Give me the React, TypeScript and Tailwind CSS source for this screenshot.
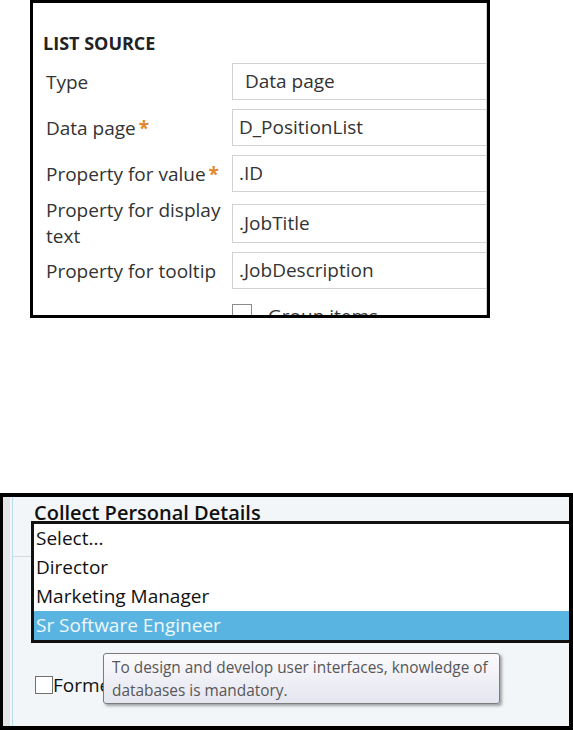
const FIELDS = [
  { label: "Type", value: "Data page", required: false, pad: "pl-[12px]" },
  { label: "Data page", value: "D_PositionList", required: true, pad: "pl-[6px]" },
  { label: "Property for value", value: ".ID", required: true, pad: "pl-[6px]" },
];

const OPTIONS = ["Select...", "Director", "Marketing Manager", "Sr Software Engineer"];

function Star() {
  return <span className="ml-[3px] font-bold text-[#e0892d]">*</span>;
}

function Field({ value, pad, tall }: { value: string; pad: string; tall?: boolean }) {
  return (
    <div className={`flex-1 -mr-[20px] flex items-center border border-[#d2d2d2] bg-white ${tall ? "h-[39px]" : "h-[37px]"} ${pad} text-[#333]`}>
      {value}
    </div>
  );
}

export default function App() {
  return (
    <div className="w-[573px] h-[730px] bg-white overflow-hidden text-[19px] text-[#333]" style={{ fontFamily: '"Open Sans", "Liberation Sans", sans-serif' }}>
      {/* list source panel */}
      <div className="ml-[30px] w-[460px] h-[318px] border-[3px] border-black overflow-hidden">
        <div className="relative h-full pt-[28px] pl-[13px] overflow-hidden">
          <h3 className="text-[18px] leading-[24px] font-bold text-[#222] -ml-[3px]">LIST SOURCE</h3>

          <div className="mt-[8px] flex flex-col">
            {FIELDS.map((f, i) => (
              <div key={f.label} className={`flex items-center ${i > 0 ? "mt-[9px]" : ""}`}>
                <div className="w-[186px] shrink-0 leading-[26px] whitespace-nowrap">
                  {f.label}
                  {f.required && <Star />}
                </div>
                <Field value={f.value} pad={f.pad} />
              </div>
            ))}
            <div className="flex items-center mt-[5px]">
              <div className="w-[186px] shrink-0 leading-[26px] pr-[4px]">Property for display text</div>
              <Field value=".JobTitle" pad="pl-[6px]" tall />
            </div>
            <div className="flex items-center mt-[3px]">
              <div className="w-[186px] shrink-0 leading-[26px] whitespace-nowrap">Property for tooltip</div>
              <Field value=".JobDescription" pad="pl-[6px]" />
            </div>
            <div className="flex items-start mt-[15px] ml-[186px] gap-[16px]">
              <span className="w-[20px] h-[20px] border border-[#8a8a8a] bg-white shrink-0" />
              <span className="leading-[26px] -mt-[1px]">Group items</span>
            </div>
          </div>
          <div className="absolute right-0 top-0 bottom-0 w-px bg-[#cfcfcf]" />
        </div>
      </div>

      {/* rendered dropdown */}
      <div className="mt-[175px] relative h-[237px] border-[4px] border-l-[3px] border-black overflow-hidden flex">
        <div className="w-[7px] bg-[#e4e4e4] shrink-0" />
        <div className="w-[2px] bg-[#f3f6f8] shrink-0" />
        <div className="w-px bg-[#b8dcef] shrink-0" />
        <div className="flex-1 bg-[#f3f6f8] flex flex-col">
          <div className="h-[60px] border-b border-[#d3d9dd] pt-[4px] pl-[21px]">
            <h2 className="text-[20px] leading-[24px] font-semibold text-[#111] whitespace-nowrap">Collect Personal Details</h2>
          </div>
          <div className="pt-[119px] pl-[22px]">
            <label className="flex items-center h-[18px]">
              <span className="w-[18px] h-[18px] border-[1.5px] border-[#707070] bg-white shrink-0" />
              <span className="text-[#111] leading-[24px] whitespace-nowrap">Former employee</span>
            </label>
          </div>
        </div>

        {/* open listbox */}
        <div className="absolute left-[28px] top-[24px] w-[600px] border-[3px] border-[#111] bg-white z-10">
          {OPTIONS.map((o, i) => (
            <div
              key={o}
              className={`h-[29px] flex items-center pl-[2px] leading-[29px] ${i === OPTIONS.length - 1 ? "bg-[#5ab4e1] text-[#eef8fd]" : "text-[#111]"}`}
            >
              {o}
            </div>
          ))}
        </div>

        {/* tooltip */}
        <div className="absolute left-[100px] top-[156px] w-[397px] h-[51px] border border-[#7c7c7c] rounded-[3px] bg-gradient-to-b from-[#fbfbfd] to-[#e4e5ef] shadow-[2px_2px_3px_rgba(0,0,0,0.35)] pl-[8px] pt-[2px] text-[15.4px] leading-[23px] text-[#575757] whitespace-nowrap z-20">
          To design and develop user interfaces, knowledge of
          <br />
          databases is mandatory.
        </div>
      </div>
    </div>
  );
}
